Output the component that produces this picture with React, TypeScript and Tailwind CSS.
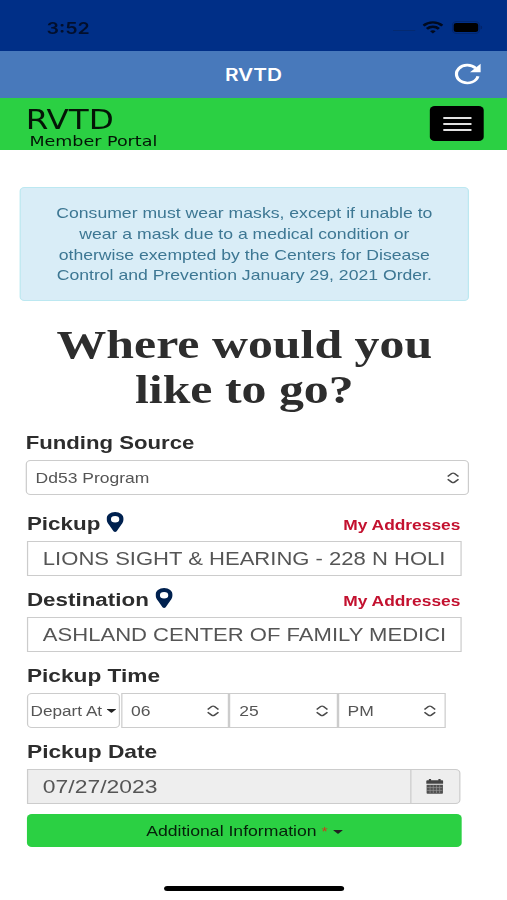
import React from "react";

const Chevrons = () => (
  <svg width="10" height="12" viewBox="0 0 10 12" fill="none" stroke="#4a4a4a" strokeWidth="1.4">
    <path d="M0.6 4.400L3.800 1.500Q5 0.700 6.200 1.500L9.400 4.400" />
    <path d="M0.6 7.200L3.800 10.100Q5 10.900 6.200 10.100L9.400 7.200" />
  </svg>
);

const Pin = () => (
  <svg width="14" height="20" viewBox="0 0 14 20" fill="#00214f">
    <path
      fillRule="evenodd"
      d="M7 0C3.100 0 0 3 0 6.900c0 2.100 0.900 3.900 2 5.900L5.700 19.200q1.300 1.600 2.600 0L12 12.800c1.100-2 2-3.800 2-5.900C14 3 10.900 0 7 0Zm0 3.900a3.400 3.300 0 1 1 0 6.600a3.400 3.300 0 1 1 0-6.600Z"
    />
  </svg>
);

const Caret = () => (
  <svg width="8" height="4" viewBox="0 0 8 4" fill="#222">
    <path d="M0.500 0h7Q8 0 7.600 0.500L4.500 3.600Q4 4 3.500 3.600L0.400 0.500Q0 0 0.500 0z" />
  </svg>
);

const Refresh = () => (
  <svg width="22" height="22" viewBox="0 0 22 22">
    <path d="M17.400 5.200A8.900 8.900 0 1 0 19.300 13.200" fill="none" stroke="#fff" strokeWidth="2.600" />
    <path d="M21.500 0.800V9.300H12.800Z" fill="#fff" />
  </svg>
);

const Calendar = () => (
  <svg width="14" height="15" viewBox="0 0 14 15">
    <path d="M0 4.700V2.500Q0 1.300 1 1.300H13Q14 1.300 14 2.500V4.700Z" fill="#444" />
    <path d="M2.200 0h1.800v2.500h-1.800zM10 0h1.800v2.500h-1.800z" fill="#444" />
    <path d="M0.300 5.700H13.700V14Q13.700 14.700 13 14.700H1Q0.300 14.700 0.300 14Z" fill="#505050" />
    <path d="M0.800 8.600H13.200M0.800 11.400H13.200M3.200 6.300V14M5.800 6.300V14M8.400 6.300V14M11 6.300V14" stroke="#999" strokeWidth="0.6" />
  </svg>
);

const StatusBar = () => (
  <div className="flex h-[51px] items-center bg-[#002f87] pr-[20px] pl-[38px] pt-[3px]">
    <span className="pt-px font-[Inter,sans-serif] text-[16px] leading-none font-semibold text-[#020f2c]">3:52</span>
    <div className="ml-auto flex items-center">
      <div className="mt-[7px] mr-[6px] h-px w-[18px] bg-[#052a70]" />
      <svg width="17" height="13" viewBox="0 0 17 13" fill="none" stroke="#010a1e" strokeWidth="2.4">
        <path d="M0.800 4.600C5 0.300 12 0.300 16.200 4.600" />
        <path d="M3.600 7.800C6.400 5.100 10.600 5.100 13.400 7.800" />
        <path d="M6.200 10.200L8.500 12.600L10.800 10.200C9.500 9 7.500 9 6.200 10.200Z" fill="#010a1e" stroke="none" />
      </svg>
      <svg className="ml-[7px]" width="25" height="13" viewBox="0 0 25 13">
        <rect x="0.500" y="0.500" width="22" height="12" rx="3.500" fill="none" stroke="#02276f" />
        <rect x="1.500" y="2" width="20" height="9" rx="2" fill="#000" />
        <path d="M23.500 4.500v4q1.300-0.600 1.300-2t-1.300-2Z" fill="#02246a" />
      </svg>
    </div>
  </div>
);

const TitleBar = () => (
  <div className="relative flex h-[47px] items-center justify-center bg-[#4879bb] pt-[2px]">
    <h1 className="font-[Inter,sans-serif] text-[17px] font-semibold text-white">RVTD</h1>
    <div className="absolute top-[12px] right-[21px]">
      <Refresh />
    </div>
  </div>
);

const PortalHeader = () => (
  <div className="flex h-[52px] justify-between bg-[#2bd043] pt-[8px] pr-[19px] pl-[22px] font-['DejaVu_Sans',sans-serif] text-[#041506]">
    <div>
      <p className="-ml-[1px] text-[26.6px] leading-[28px]">RVTD</p>
      <p className="ml-[2px] text-[14.3px] leading-[14px]">Member Portal</p>
    </div>
    <button className="flex h-[35px] w-[44px] flex-col items-center justify-center gap-[4px] rounded-[4px] bg-black">
      <span className="h-[2px] w-[23px] bg-[#e2e2e2]" />
      <span className="h-[2px] w-[23px] bg-[#e2e2e2]" />
      <span className="h-[2px] w-[23px] bg-[#e2e2e2]" />
    </button>
  </div>
);

const Address = ({ label, value }: { label: string; value: string }) => (
  <div className="mb-[7px]">
    <div className="flex h-[34px] items-center">
      <label className="text-[18.3px] font-bold">{label}</label>
      <div className="mb-[4px] ml-[5px]">
        <Pin />
      </div>
      <a className="mt-[3px] mr-px ml-auto text-[14.2px] font-bold text-[#c3112f]">My Addresses</a>
    </div>
    <div className="h-[35px] overflow-hidden border border-[#ccc] px-[12px] text-[18px] leading-[35px] whitespace-nowrap text-[#555]">
      {value}
    </div>
  </div>
);

const TimeSelect = ({ value }: { value: string }) => (
  <div className="flex h-[35px] w-[88.4px] items-center justify-between border border-[#ccc] pr-[7px] pl-[7px]">
    <span className="pt-[3px]">{value}</span>
    <Chevrons />
  </div>
);

const App = () => {
  return (
    <div className="h-[900px] w-[507px] overflow-hidden bg-white">
      <div className="h-[900px] w-[414px] origin-top-left scale-x-[1.2246] font-['Liberation_Sans',Arial,sans-serif] text-[#2d2d2d]">
        <StatusBar />
        <TitleBar />
        <PortalHeader />
        <div className="mt-[37px] ml-[16px] h-[114px] w-[367px] rounded-[4px] border border-[#bce8f1] bg-[#d9edf7] pt-[15px] text-center text-[14.4px] leading-[20.8px] text-[#3d7793]">
          <p>Consumer must wear masks, except if unable to</p>
          <p>wear a mask due to a medical condition or</p>
          <p>otherwise exempted by the Centers for Disease</p>
          <p>Control and Prevention January 29, 2021 Order.</p>
        </div>
        <h2 className="mt-[21px] ml-[16px] w-[367px] text-center font-['Liberation_Serif',serif] text-[40.7px] leading-[45px] font-bold">
          Where would you
          <br />
          like to go?
        </h2>
        <div className="ml-[21px] w-[362px]">
          <label className="mt-[16px] block text-[18.1px] leading-[30px] font-bold">Funding Source</label>
          <div className="mt-[2px] flex h-[35px] items-center justify-between rounded-[4px] border border-[#ccc] pr-[7px] pl-[7px] text-[14.3px] text-[#555]">
            <span className="pt-[2px]">Dd53 Program</span>
            <Chevrons />
          </div>
        </div>
        <div className="mt-[12px] ml-[22px] w-[355px]">
          <Address label="Pickup" value="LIONS SIGHT & HEARING - 228 N HOLI" />
          <Address label="Destination" value="ASHLAND CENTER OF FAMILY MEDICI" />
          <label className="block h-[34px] text-[18.5px] leading-[34px] font-bold">Pickup Time</label>
          <div className="flex text-[14.3px] text-[#555]">
            <div className="mr-px flex h-[35px] w-[76px] items-center justify-between rounded-[4px] border border-[#ccc] pr-[2px] pl-[2px] whitespace-nowrap">
              <span className="pt-px text-[14px]">Depart At</span>
              <Caret />
            </div>
            <TimeSelect value="06" />
            <TimeSelect value="25" />
            <TimeSelect value="PM" />
          </div>
          <label className="mt-[7px] block h-[34px] text-[18.6px] leading-[34px] font-bold">Pickup Date</label>
          <div className="flex h-[35px] w-[353.600px] rounded-r-[4px] border border-[#ccc] bg-[#eee] text-[#555]">
            <span className="grow pl-[12px] text-[18.7px] leading-[34px]">07/27/2023</span>
            <div className="flex w-[40px] items-center justify-center border-l border-[#ccc]">
              <Calendar />
            </div>
          </div>
          <button className="mt-[10px] flex h-[33px] w-full items-center justify-center rounded-[4px] bg-[#2bd043] pt-[2px] text-[14.4px] text-[#06200a]">
            Additional Information
            <span className="mr-[4px] ml-[4px] text-[13px] leading-[18px] text-[#d03a1a]">*</span>
            <Caret />
          </button>
        </div>
        <div className="mt-[39px] ml-[134px] h-[5px] w-[147px] rounded-full bg-black" />
      </div>
    </div>
  );
};

export default App;
